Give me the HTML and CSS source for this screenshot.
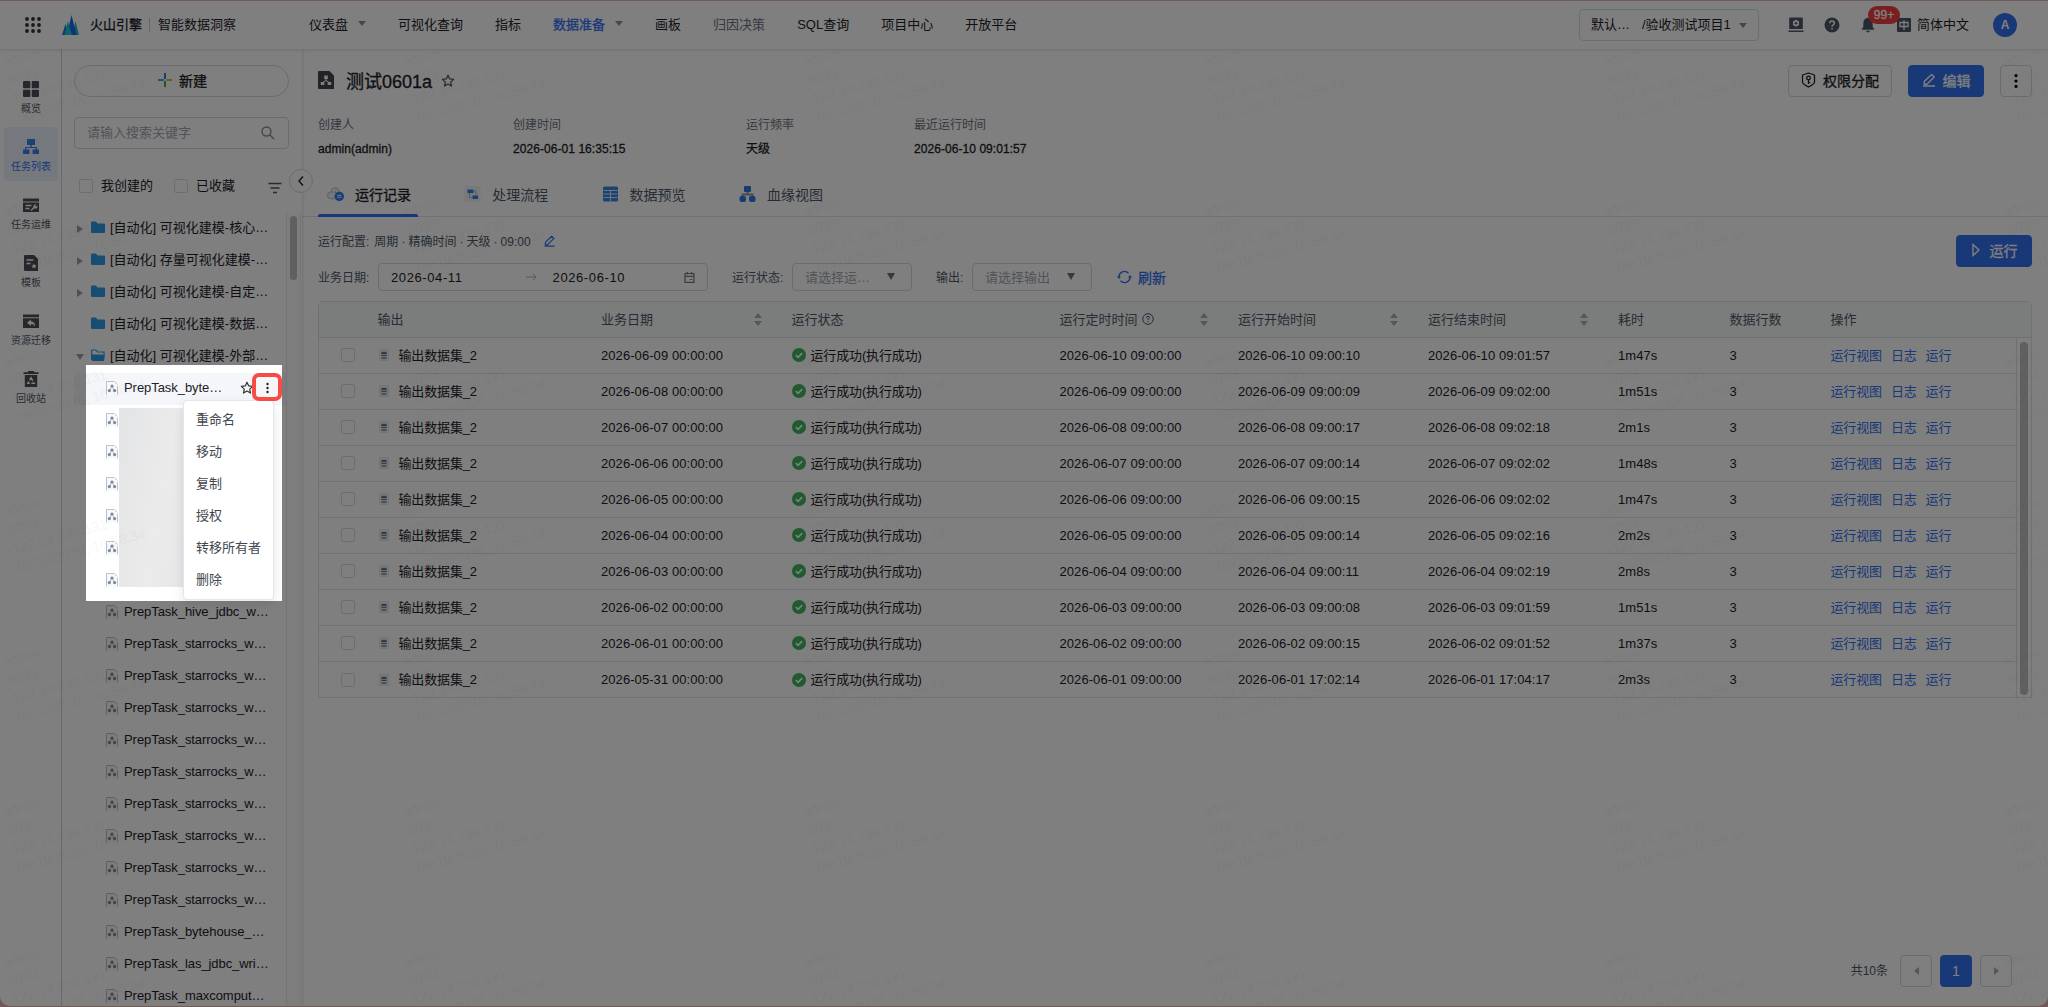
FILE: index.html
```html
<!DOCTYPE html>
<html lang="zh-CN">
<head>
  <meta charset="UTF-8">
  <meta name="viewport" content="width=device-width, initial-scale=1.0">
  <title>智能数据洞察</title>
  <link rel="stylesheet" href="styles.css">
</head>
<body>
  <!-- Icons -->
  <svg class="sprite" width="0" height="0">
    <symbol id="star" viewBox="0 0 14 14"><path d="M7 1.2l1.7 3.7 4 .5-3 2.7.8 4L7 10.1l-3.5 2 .8-4-3-2.7 4-.5z" fill="none" stroke="currentColor" stroke-width="1.2" stroke-linejoin="round"/></symbol>
    <symbol id="dots" viewBox="0 0 4 16"><circle cx="2" cy="2.6" r="1.6"/><circle cx="2" cy="8" r="1.6"/><circle cx="2" cy="13.4" r="1.6"/></symbol>
    <symbol id="edit" viewBox="0 0 14 14"><path d="M2.2 8.6L9.6 1.4l2.6 2.6-7.4 7.2H2.2zM1 13h12" fill="none" stroke="currentColor" stroke-width="1.4" stroke-linejoin="round"/></symbol>
    <symbol id="folder" viewBox="0 0 14 13"><path d="M0 1.5Q0 .5 1 .5h4l1.500 2H13q1 0 1 1V11q0 1-1 1H1q-1 0-1-1z" fill="#2a9be6"/></symbol>
    <symbol id="folder-open" viewBox="0 0 14 13"><path d="M.6 11V1.500Q.6 1 1 1h4l1.500 2H13v2" fill="none" stroke="#2a9be6" stroke-width="1.200"/><path d="M1 5.500h13L13 12H1z" fill="#2a9be6"/></symbol>
    <symbol id="task" viewBox="0 0 12 14"><path d="M.5.5h8l3 3v10H.5z" fill="#f7f8fa"/><path d="M.5 13.500V.5h7.500M11.500 5v8.500M8.500.5l3 3" fill="none" stroke="#b4bac5" stroke-width=".9"/><circle cx="6" cy="5" r="1.600"/><circle cx="3.400" cy="9.600" r="1.600"/><circle cx="8.600" cy="9.600" r="1.600"/><path d="M6 5L3.400 9.600M6 5l2.600 4.600" stroke="currentColor" stroke-width=".6"/></symbol>
    <symbol id="dataset" viewBox="0 0 10 12"><path d="M.5.5h9v11h-9z" fill="#f0f1f4" stroke="#dfe2e8" stroke-width=".7"/><ellipse cx="5" cy="4" rx="3" ry="1.200"/><path d="M2 5.400q3 1.400 6 0v1.200q-3 1.400-6 0zM2.500 8q2.500 1.200 5 0v1.200q-2.500 1-5 0z"/></symbol>
    <symbol id="ok" viewBox="0 0 14 14"><circle cx="7" cy="7" r="7" fill="#41b45f"/><path d="M3.800 7.200l2.300 2.200 4.100-4.300" fill="none" stroke="#fff" stroke-width="1.600"/></symbol>
    <symbol id="org" viewBox="0 0 16 16"><path d="M4 0h8v6H4zM0 10.500h6.500V15H0zM9.500 10.500H16V15H9.500zM7.300 6h1.400v2H14v2.500h-1.400V9H3.400v1.500H2V8h5.300z"/></symbol>
  </svg>

  <div class="window">
    <header class="header">
      <svg class="apps" width="16" height="16" viewBox="0 0 16 16"><circle cx="2" cy="2" r="1.900"/><circle cx="8" cy="2" r="1.900"/><circle cx="14" cy="2" r="1.900"/><circle cx="2" cy="8" r="1.900"/><circle cx="8" cy="8" r="1.900"/><circle cx="14" cy="8" r="1.900"/><circle cx="2" cy="14" r="1.900"/><circle cx="8" cy="14" r="1.900"/><circle cx="14" cy="14" r="1.900"/></svg>
      <svg class="logo" width="17" height="20" viewBox="0 0 17 20"><path d="M10 20L13.500 6 17 20z" fill="#2db7c4"/><path d="M0 20L3.500 9 7 20z" fill="#1e74e6"/><path d="M5 20L9.500 0 14.500 20z" fill="#1668e8"/><path d="M2.500 20L5.800 6 10 20z" fill="#23c3cf"/></svg>
      <b class="brand">火山引擎</b>
      <i class="brand-line"></i>
      <span class="product">智能数据洞察</span>
      <nav class="nav">
        <span>仪表盘<i class="caret"></i></span>
        <span>可视化查询</span>
        <span>指标</span>
        <span class="current">数据准备<i class="caret"></i></span>
        <span>画板</span>
        <span class="muted">归因决策</span>
        <span>SQL查询</span>
        <span>项目中心</span>
        <span>开放平台</span>
      </nav>
      <div class="project"><span>默认…</span><span>/验收测试项目1</span><i class="caret"></i></div>
      <div class="tools">
        <svg width="16" height="16" viewBox="0 0 16 16"><path fill-rule="evenodd" d="M2 .5h12q.8 0 .8.800V12H1.200V1.300Q1.200.5 2 .5zm6 2.300L5 4.500v3.600l3 1.700 3-1.700V4.500zM.5 13.500h15V15H.5z"/><circle cx="8" cy="6.300" r="1.300"/></svg>
        <svg width="16" height="16" viewBox="0 0 16 16"><circle cx="8" cy="8" r="7.500"/><path d="M5.700 6.300q0-2.200 2.300-2.200t2.300 2q0 1.200-1.200 1.800Q8 8.400 8 9.700M8 10.900v1.700" fill="none" stroke="#fff" stroke-width="1.500"/></svg>
        <div class="bell">
          <svg width="14" height="16" viewBox="0 0 14 16"><path d="M7 .8q4.700.7 4.700 5.500V10l1.500 2v.8H.8V12l1.500-2V6.300Q2.300 1.500 7 .8zM5 13.700h4Q8.700 15.500 7 15.500T5 13.700z"/></svg>
          <span class="badge">99+</span>
        </div>
        <div class="lang">
          <svg width="14" height="14" viewBox="0 0 14 14"><rect width="14" height="14" rx="1"/><path d="M3 4.500h8v4H3zM7 2.200v9.800" fill="none" stroke="#fff" stroke-width="1.300"/></svg>
          <span>简体中文</span>
        </div>
        <div class="avatar">A</div>
      </div>
    </header>

    <div class="body">
      <aside class="rail">
        <div class="rail-item"><svg width="16" height="16" viewBox="0 0 16 16"><rect width="7.300" height="7.300" rx="1"/><rect x="8.700" width="7.300" height="7.300" rx="1"/><rect y="8.700" width="7.300" height="7.300" rx="1"/><rect x="8.700" y="8.700" width="7.300" height="7.300" rx="1"/></svg>概览</div>
        <div class="rail-item active"><svg width="16" height="16"><use href="#org"/></svg>任务列表</div>
        <div class="rail-item"><svg width="16" height="16" viewBox="0 0 16 16"><path d="M0 1.500h16v3H0zM0 5.500h16V15H0z"/><path d="M2.500 8.500h6M2.500 11.500h4M8 13.500l3.500-3.500" stroke="#fff" stroke-width="1.300"/><path d="M10.500 10.500a2.300 2.300 0 013-3l-1.200 1.300.9.900 1.300-1.200a2.300 2.300 0 01-3 3z" fill="#fff"/></svg>任务运维</div>
        <div class="rail-item"><svg width="16" height="16" viewBox="0 0 16 16"><path d="M2 0h9l4 4v12H2q-1 0-1-1V1q0-1 1-1z"/><path d="M3.500 5h7M3.500 8.500h4" stroke="#fff" stroke-width="1.300"/><path d="M11 8.500l.8 1.700 1.800.3-1.300 1.200.3 1.800-1.600-.9-1.600.9.300-1.800-1.300-1.200 1.800-.3z" fill="#fff"/></svg>模板</div>
        <div class="rail-item"><svg width="16" height="16" viewBox="0 0 16 16"><path d="M0 1.500h16v2.700H0zM0 5.200h16V15H0z"/><path d="M4 9.800l4-3.300v2q4 0 4 5-1.300-2.400-4-2.400V13z" fill="#fff"/></svg>资源迁移</div>
        <div class="rail-item"><svg width="16" height="16" viewBox="0 0 16 16"><path d="M5 0h6v1.200h4.500v1.700H.5V1.200H5zM1.800 4h12.400v12H1.800z"/><path d="M8 6.700l3.200 5.500H4.800z" fill="none" stroke="#fff" stroke-width="1.400" stroke-dasharray="3.800 1.600"/></svg>回收站</div>
      </aside>

      <section class="sidebar">
        <div class="new-btn"><svg width="14" height="14" viewBox="0 0 14 14"><path d="M7 0v6" stroke="#2b6bf3" stroke-width="1.800"/><path d="M0 7h6" stroke="#35a9f5" stroke-width="1.800"/><path d="M8 7h6" stroke="#f5b324" stroke-width="1.800"/><path d="M7 8v6" stroke="#2ea12e" stroke-width="1.800"/></svg>新建</div>
        <div class="search"><span>请输入搜索关键字</span><svg width="14" height="14" viewBox="0 0 14 14"><circle cx="5.500" cy="5.500" r="4.500"/><path d="M8.800 8.800l4.400 4.400"/></svg></div>
        <div class="filters">
          <i class="checkbox"></i><span>我创建的</span>
          <i class="checkbox second"></i><span>已收藏</span>
          <svg width="14" height="12" viewBox="0 0 14 12"><path d="M.5 1.500h13M2.500 6h9M5 10.500h4" stroke="#4e5969" stroke-width="1.300"/></svg>
        </div>
        <div class="tree-wrap">
          <div class="tree" id="tree"></div>
          <div class="tree-scroll"><i></i></div>
        </div>
        <div class="collapse"><svg width="8" height="12" viewBox="0 0 8 12"><path d="M6 1.500L2 6l4 4.500" fill="none" stroke="#1d2129" stroke-width="1.400"/></svg></div>
      </section>

      <main class="main">
        <div class="title-row">
          <svg width="16" height="18" viewBox="0 0 16 18"><path d="M1 0h10.500L16 4.500V18H1q-1 0-1-1V1q0-1 1-1z" fill="#42464e"/><path d="M6.200 4.500h3.600V8H6.200zM2.800 11h3.500v3H2.800zM9.700 11h3.500v3H9.700zM7.500 8h1v1.200l3 2-1 .6L8 10l-2.500 1.800-1-.6 3-2z" fill="#fff"/></svg>
          <h1>测试0601a</h1>
          <svg class="fav" width="14" height="14"><use href="#star"/></svg>
          <div class="btn auth"><svg width="15" height="16" viewBox="0 0 15 16"><path d="M7.500 1l6 2v7q0 2-6 5-6-3-6-5V3z" fill="none" stroke="#1d2129" stroke-width="1.300" stroke-linejoin="round"/><circle cx="7.500" cy="6" r="1.800" fill="none" stroke="#1d2129" stroke-width="1.300"/><path d="M7.500 8v4M7.500 10.500h1.700" stroke="#1d2129" stroke-width="1.200"/></svg>权限分配</div>
          <div class="btn primary"><svg width="14" height="14"><use href="#edit"/></svg>编辑</div>
          <div class="btn more"><svg width="4" height="16"><use href="#dots"/></svg></div>
        </div>

        <div class="meta">
          <div><p>创建人</p><b>admin(admin)</b></div>
          <div><p>创建时间</p><b>2026-06-01 16:35:15</b></div>
          <div><p>运行频率</p><b>天级</b></div>
          <div><p>最近运行时间</p><b>2026-06-10 09:01:57</b></div>
        </div>

        <div class="tabs">
          <div class="tab on"><svg width="18" height="16" viewBox="0 0 18 16"><path d="M4 13Q.5 13 .5 9.500T4 6Q4.500 1.500 8.500 1.500T13 6q2 .5 2.500 3v4z" fill="#f2f3f5" stroke="#a5abb5" stroke-width=".8"/><path d="M6 5.500v1M9 5.500v1" stroke="#555"/><circle cx="13" cy="10.500" r="5" fill="#2a7df0"/><path d="M10.500 9.500h4.500l-1-1M15.500 11.500H11l1 1" fill="none" stroke="#fff" stroke-width=".9"/></svg>运行记录</div>
          <div class="tab"><svg width="16" height="16" viewBox="0 0 16 16"><rect width="16" height="16" fill="#f2f3f5"/><path d="M3 3.500h6v3.500H3zM8 9.500h5.500V13H8z" fill="#2a82ee"/><path d="M9 5h2.500v4.500M5 7v4.500h2.500" fill="none" stroke="#a9b4c6"/></svg>处理流程</div>
          <div class="tab"><svg width="16" height="16" viewBox="0 0 16 16"><rect x=".5" y=".5" width="15" height="15" rx="1.500" fill="#3a85e2"/><path d="M1 4.500h14M1 8h14M1 11.500h14M8 4v11.500" stroke="#dcebff"/></svg>数据预览</div>
          <div class="tab"><svg width="16" height="16" viewBox="0 0 16 16"><path d="M8 5v3M3 11V8.500h10V11" fill="none" stroke="#8e97a6" stroke-width="2"/><rect x="4.500" width="7" height="6" rx="1" fill="#2a7be2"/><rect y="10" width="6.500" height="6" rx="2" fill="#2a7be2"/><rect x="9.500" y="10" width="6.500" height="6" rx="2" fill="#2a7be2"/></svg>血缘视图</div>
        </div>

        <div class="controls">
          <div>
            <div class="config"><span>运行配置:</span>周期 · 精确时间 · 天级 · 09:00<svg width="13" height="12" viewBox="0 0 14 14"><use href="#edit"/></svg></div>
            <div class="filter-row">
              <label>业务日期:</label>
              <div class="range"><span>2026-04-11</span><svg width="11" height="8" viewBox="0 0 11 8"><path d="M0 4h10M7 1l3 3-3 3" fill="none" stroke="#a9aeb8"/></svg><span>2026-06-10</span><svg class="cal" width="11" height="11" viewBox="0 0 11 11"><path d="M1 1.500h9v8.800H1zM1 4.300h9M3.300 0v2.500M7.700 0v2.500M6 7.500h2.200" fill="none" stroke="#737b89" stroke-width="1.200"/></svg></div>
              <label class="lb-state">运行状态:</label>
              <div class="select">请选择运…<i class="caret"></i></div>
              <label class="lb-out">输出:</label>
              <div class="select">请选择输出<i class="caret"></i></div>
              <div class="refresh"><svg width="15" height="14" viewBox="0 0 15 14"><path d="M2 7.500a5.500 5.500 0 019.500-4.300M13 6.500a5.500 5.500 0 01-9.500 4.300" fill="none" stroke="currentColor" stroke-width="1.400"/><path d="M0 6.500h4L2 9zM11 7.500h4l-2-2.500z"/></svg>刷新</div>
            </div>
          </div>
          <div class="btn primary run"><svg width="10" height="14" viewBox="0 0 10 14"><path d="M2 1.500L8 7l-6 5.500z" fill="none" stroke="currentColor" stroke-width="1.400"/></svg>运行</div>
        </div>

        <div class="table">
          <div class="tr th">
            <div></div>
            <div>输出</div>
            <div>业务日期<i class="sort"></i></div>
            <div>运行状态</div>
            <div>运行定时时间<svg class="help" width="12" height="12" viewBox="0 0 12 12"><circle cx="6" cy="6" r="5.300"/><path d="M4.500 4.800q0-1.500 1.500-1.500t1.500 1.400Q7.500 5.500 6 6.200v.8M6 8v1.200"/></svg><i class="sort"></i></div>
            <div>运行开始时间<i class="sort"></i></div>
            <div>运行结束时间<i class="sort"></i></div>
            <div>耗时</div>
            <div>数据行数</div>
            <div>操作</div>
          </div>
          <div class="table-body">
            <div class="rows" id="rows"></div>
            <div class="table-scroll"><i></i></div>
          </div>
        </div>

        <div class="pager">
          <span>共10条</span>
          <div class="page"><i class="prev"></i></div>
          <div class="page cur">1</div>
          <div class="page"><i class="next"></i></div>
        </div>
      </main>
    </div>

    <svg class="watermark" width="2048" height="957">
      <defs>
        <pattern id="wm" width="400" height="150" patternUnits="userSpaceOnUse">
          <g transform="translate(4 18) rotate(-15)">
            <text x="0" y="0">admin</text>
            <text x="0" y="19">8093</text>
            <text x="0" y="38">122.14.236.131</text>
            <text x="0" y="57">06/10/2026, 16:58:34</text>
          </g>
        </pattern>
      </defs>
      <rect width="2048" height="957" fill="url(#wm)"/>
    </svg>
  </div>

  <div class="spotlight"></div>
  <div class="mark"></div>

  <script>
    const folders = ['[自动化] 可视化建模-核心…', '[自动化] 存量可视化建模-…', '[自动化] 可视化建模-自定…', '[自动化] 可视化建模-数据…', '[自动化] 可视化建模-外部…'];
    const arrows = ['right', 'right', 'right', 'none', 'down'];
    const menu = ['重命名', '移动', '复制', '授权', '转移所有者', '删除'];
    const tasks = ['PrepTask_hive_jdbc_w…'].concat(Array(9).fill('PrepTask_starrocks_w…'), ['PrepTask_bytehouse_…', 'PrepTask_las_jdbc_wri…', 'PrepTask_maxcomput…']);
    const taskIcon = '<svg class="task-icon" width="12" height="14"><use href="#task"/></svg>';

    // Tree
    let tree = '';
    folders.forEach((name, i) => {
      const icon = i === 4 ? 'folder-open' : 'folder';
      tree += `<div class="node"><i class="arrow ${arrows[i]}"></i><svg width="14" height="13"><use href="#${icon}"/></svg><span class="folder-name">${name}</span></div>`;
    });
    tree += `<div class="node leaf hover">${taskIcon}PrepTask_byte…
      <svg class="node-star" width="14" height="14"><use href="#star"/></svg>
      <svg class="node-more" width="3" height="12"><use href="#dots"/></svg>
      <div class="menu">${menu.map(m => `<div>${m}</div>`).join('')}</div></div>`;
    tree += `<div class="hidden-names">${menu.map(() => `<div class="node leaf">${taskIcon}</div>`).join('')}<div class="cover"></div></div>`;
    tasks.forEach(name => {
      tree += `<div class="node leaf">${taskIcon}${name}</div>`;
    });
    document.getElementById('tree').innerHTML = tree;

    // Run records: business date, scheduled, start, end, cost
    const records = [
      ['2026-06-09', '2026-06-10', '09:00:10', '09:01:57', '1m47s'],
      ['2026-06-08', '2026-06-09', '09:00:09', '09:02:00', '1m51s'],
      ['2026-06-07', '2026-06-08', '09:00:17', '09:02:18', '2m1s'],
      ['2026-06-06', '2026-06-07', '09:00:14', '09:02:02', '1m48s'],
      ['2026-06-05', '2026-06-06', '09:00:15', '09:02:02', '1m47s'],
      ['2026-06-04', '2026-06-05', '09:00:14', '09:02:16', '2m2s'],
      ['2026-06-03', '2026-06-04', '09:00:11', '09:02:19', '2m8s'],
      ['2026-06-02', '2026-06-03', '09:00:08', '09:01:59', '1m51s'],
      ['2026-06-01', '2026-06-02', '09:00:15', '09:01:52', '1m37s'],
      ['2026-05-31', '2026-06-01', '17:02:14', '17:04:17', '2m3s']
    ];
    document.getElementById('rows').innerHTML = records.map(r => `<div class="tr">
      <div><i class="checkbox"></i></div>
      <div><svg class="ds" width="10" height="12"><use href="#dataset"/></svg>输出数据集_2</div>
      <div>${r[0]} 00:00:00</div>
      <div><svg class="ok" width="14" height="14"><use href="#ok"/></svg>运行成功(执行成功)</div>
      <div>${r[1]} 09:00:00</div>
      <div>${r[1]} ${r[2]}</div>
      <div>${r[1]} ${r[3]}</div>
      <div>${r[4]}</div>
      <div>3</div>
      <div class="ops"><a>运行视图</a><a>日志</a><a>运行</a></div>
    </div>`).join('');
  </script>
</body>
</html>
```

FILE: styles.css
```css
* {
  box-sizing: border-box;
}

body {
  margin: 0;
  height: 1007px;
  padding-top: 1px;
  overflow: hidden;
  background: #dfb8b0;
  font-family: "Liberation Sans", "Noto Sans CJK SC", sans-serif;
  font-size: 13px;
  color: #1d2129;
}

i {
  font-style: normal;
}

.sprite {
  position: absolute;
}

svg {
  flex: none;
}

.window {
  position: relative;
  height: 1005px;
  background: #fff;
  border-radius: 0 0 10px 10px;
  overflow: hidden;
}

.caret {
  display: inline-block;
  border: 4px solid transparent;
  border-top: 5px solid #86909c;
  border-bottom: 0;
}

.checkbox {
  display: inline-block;
  width: 14px;
  height: 14px;
  border: 1px solid #d8dce5;
  border-radius: 2px;
}

/* Header */
.header {
  position: relative;
  z-index: 3;
  display: flex;
  align-items: center;
  height: 48px;
  padding: 0 31px 0 25px;
  background: #fff;
  box-shadow: 0 1px 4px rgba(0, 0, 0, .12);
}

.header > span, .header > b, .nav, .project {
  line-height: 18px;
}

.apps {
  fill: #333;
}

.logo {
  margin: 0 11px 0 21px;
}

.brand, .new-btn, .title-row h1, .meta b, .tab.on, .btn, .refresh, .current {
  font-weight: normal;
  -webkit-text-stroke: .3px currentColor;
}

.brand-line {
  width: 1px;
  height: 14px;
  margin: 0 8px 0 7px;
  background: #c9cdd4;
}

.nav {
  display: flex;
  gap: 32px;
  margin-left: 73px;
}

.nav .caret {
  margin-left: 10px;
  vertical-align: 3px;
}

.nav .current {
  color: #3370f0;
}

.nav .muted {
  color: #6b7280;
}

.project {
  display: flex;
  align-items: center;
  width: 180px;
  height: 32px;
  margin-left: auto;
  padding: 0 11px;
  gap: 12px;
  border: 1px solid #d9dce2;
  border-radius: 4px;
}

.project .caret {
  margin-left: -4px;
}

.tools {
  display: flex;
  align-items: center;
  margin-left: 29px;
  fill: #4e5969;
}

.tools > svg + svg {
  margin-left: 20px;
}

.bell {
  position: relative;
  height: 16px;
  margin-left: 21px;
}

.badge {
  position: absolute;
  top: -11px;
  left: 7px;
  width: 32px;
  height: 18px;
  border-radius: 9px;
  background: #f53f3f;
  color: #fff;
  font-size: 12px;
  line-height: 18px;
  text-align: center;
  -webkit-text-stroke: .3px #fff;
}

.lang {
  display: flex;
  align-items: center;
  gap: 6px;
  margin-left: 22px;
  line-height: 18px;
}

.avatar {
  width: 24px;
  height: 24px;
  margin-left: 24px;
  border-radius: 50%;
  background: #3370f0;
  color: #fff;
  font-size: 12px;
  font-weight: bold;
  line-height: 24px;
  text-align: center;
}

.body {
  display: flex;
  height: 957px;
}

/* Left rail */
.rail {
  display: flex;
  flex-direction: column;
  gap: 4px;
  width: 62px;
  padding: 20px 4px;
  border-right: 1px solid #d5d8de;
}

.rail-item {
  display: flex;
  flex-direction: column;
  align-items: center;
  gap: 5px;
  width: 54px;
  height: 54px;
  padding-top: 12px;
  border-radius: 4px;
  font-size: 10px;
  line-height: 14px;
  color: #4e5969;
  fill: #4a4e56;
}

.rail-item.active {
  background: #eaf1fb;
  color: #3370f0;
  fill: #3a82ea;
}

/* Tree panel */
.sidebar {
  position: relative;
  z-index: 2;
  display: flex;
  flex-direction: column;
  width: 240px;
  padding-top: 16px;
  box-shadow: 1px 0 3px rgba(0, 0, 0, .12);
}

.new-btn {
  display: flex;
  align-items: center;
  justify-content: center;
  gap: 7px;
  width: 215px;
  height: 32px;
  margin-left: 12px;
  padding: 0 0 2px 2px;
  border: 1px solid #d5d8de;
  border-radius: 16px;
  font-size: 14px;
}

.search {
  display: flex;
  align-items: center;
  justify-content: space-between;
  width: 215px;
  height: 32px;
  margin: 20px 0 0 12px;
  padding: 0 13px 0 12px;
  border: 1px solid #d5d8de;
  border-radius: 4px;
  color: #a0a6b1;
}

.search span {
  padding-bottom: 4px;
}

.search svg {
  fill: none;
  stroke: #86909c;
  stroke-width: 1.4;
}

.filters {
  display: flex;
  align-items: center;
  height: 20px;
  margin: 27px 0 17px 17px;
}

.filters span {
  padding-bottom: 3px;
}

.filters .checkbox {
  margin-right: 8px;
}

.filters .second {
  margin-left: 21px;
}

.filters svg {
  margin: 3px 0 0 33px;
}

.tree-wrap {
  display: flex;
  flex: 1;
  min-height: 0;
}

.tree {
  width: 224px;
  overflow: hidden;
}

.tree-scroll {
  width: 15px;
  padding: 3px 3px 0;
  border: 1px solid #ebebeb;
  border-width: 0 1px;
  background: #fafafa;
}

.tree-scroll i {
  display: block;
  height: 64px;
  border-radius: 4px;
  background: #c1c1c1;
}

.node {
  display: flex;
  align-items: center;
  height: 32px;
  margin-left: 12px;
  padding-bottom: 3px;
  white-space: nowrap;
}

.folder-name {
  margin-left: 5px;
  padding-bottom: 2px;
}

.arrow {
  width: 9px;
  margin: 3px 4px 0 4px;
}

.arrow.right {
  border: 4px solid transparent;
  border-left: 6px solid #9aa1ad;
  border-right: 0;
  width: 6px;
  margin: 3px 8px 0 3px;
}

.arrow.down {
  border: 4px solid transparent;
  border-top: 6px solid #9aa1ad;
  border-bottom: 0;
  width: 8px;
  margin: 3px 7px 0 2px;
}

.leaf {
  padding-left: 32px;
  letter-spacing: -.06px;
}

.task-icon {
  margin-right: 6px;
  fill: #7a879c;
  color: #7a879c;
}

.hover {
  position: relative;
  background: #f4f6f9;
}

.node-star {
  margin-left: 18px;
  color: #333;
}

.node-more {
  margin-left: 12px;
  fill: #222;
}

.menu {
  position: absolute;
  z-index: 2;
  top: 27px;
  left: 109px;
  width: 91px;
  height: 200px;
  padding: 3px 12px;
  border: 1px solid #e2e5eb;
  border-radius: 4px;
  background: #fff;
  box-shadow: 0 4px 12px rgba(0, 0, 0, .1);
  color: #42464e;
  line-height: 32px;
  letter-spacing: 0;
}

.hidden-names {
  position: relative;
}

.cover {
  position: absolute;
  top: 3px;
  left: 57px;
  width: 66px;
  height: 179px;
  background: linear-gradient(100deg, #e3e4e5, #ebebec 60%, #e6e7e8);
}

.collapse {
  position: absolute;
  top: 120px;
  left: 227px;
  display: flex;
  align-items: center;
  justify-content: center;
  width: 24px;
  height: 24px;
  border: 1px solid #d5d8de;
  border-radius: 50%;
  background: #fff;
}

/* Main */
.main {
  display: flex;
  flex: 1;
  flex-direction: column;
  min-width: 0;
}

.title-row {
  display: flex;
  align-items: center;
  height: 32px;
  margin: 16px 16px 0;
}

.title-row > svg:first-child {
  margin-bottom: 2px;
}

.title-row h1 {
  margin: 0 9px 0 12px;
  padding-bottom: 3px;
  font-size: 18px;
}

.fav {
  margin-bottom: 1px;
  color: #4a4f58;
}

.btn {
  display: flex;
  align-items: center;
  justify-content: center;
  gap: 7px;
  height: 32px;
  padding-bottom: 2px;
  border: 1px solid #d5d8de;
  border-radius: 4px;
  font-size: 14px;
}

.auth {
  width: 104px;
  margin-left: auto;
}

.primary {
  width: 76px;
  margin-left: 16px;
  border-color: #3370f0;
  background: #3370f0;
  color: #fff;
}

.more {
  width: 32px;
  margin-left: 16px;
  padding-bottom: 0;
}

.meta {
  display: grid;
  grid-template-columns: 195px 233px 168px auto;
  margin: 18px 16px 0;
  font-size: 12px;
  line-height: 20px;
}

.meta p {
  margin: 0 0 4px;
  color: #6b7280;
}

.meta b {
  letter-spacing: .06px;
}

.tabs {
  display: flex;
  gap: 37.3px;
  height: 42px;
  margin-top: 16px;
  padding: 0 16px;
  border-bottom: 1px solid #dfe2e8;
  color: #4e5969;
}

.tab {
  position: relative;
  display: flex;
  align-items: center;
  gap: 11px;
  width: 100px;
  height: 41px;
  padding: 0 0 4px 9px;
  font-size: 14px;
}

.tab svg {
  width: 17px;
}

.tab.on {
  color: #1d2129;
}

.tab.on::after {
  content: "";
  position: absolute;
  bottom: -1px;
  left: 0;
  width: 100px;
  height: 3px;
  border-radius: 2px 2px 0 0;
  background: #3370f0;
}

.controls {
  display: flex;
  justify-content: space-between;
  height: 84px;
  padding: 0 16px;
}

.run {
  margin-top: 18px;
  gap: 9px;
}

.config {
  display: flex;
  align-items: center;
  height: 19px;
  margin-top: 14px;
  font-size: 12px;
  color: #4e5969;
  word-spacing: -.3px;
}

.config span {
  margin-right: 5px;
}

.config svg {
  margin-left: 12px;
  color: #3370f0;
}

.filter-row {
  display: flex;
  align-items: center;
  height: 28px;
  margin-top: 13px;
}

.filter-row label {
  width: 60px;
  padding-bottom: 2px;
  font-size: 12px;
  color: #4e5969;
}

.filter-row .lb-state {
  margin-left: 24px;
}

.filter-row .lb-out {
  width: 36px;
  margin-left: 24px;
}

.range, .select {
  display: flex;
  align-items: center;
  height: 28px;
  border: 1px solid #d5d8de;
  border-radius: 4px;
}

.range {
  width: 330px;
  padding: 0 12px;
  letter-spacing: .6px;
}

.range svg {
  margin: 0 16px 0 63px;
}

.range .cal {
  margin: 0 0 0 auto;
}

.select {
  width: 120px;
  padding: 0 16px 1px 12px;
  justify-content: space-between;
  color: #a0a6b1;
}

.select .caret {
  border-top: 7px solid #6b7280;
}

.refresh {
  display: flex;
  align-items: center;
  gap: 6px;
  margin-left: 25px;
  color: #3370f0;
  fill: #3370f0;
  font-size: 14px;
}

/* Records table */
.table {
  margin: 0 16px;
  border: 1px solid #dfe2e8;
  border-radius: 4px 4px 0 0;
}

.tr {
  display: grid;
  grid-template-columns: 58.5px 223.5px 190.5px 268px 178.5px 190px 190px 111.5px 101px auto;
  height: 36px;
  border-bottom: 1px solid #dfe2e8;
}

.tr > div {
  display: flex;
  align-items: center;
  padding-bottom: 2px;
}

.rows .tr > div {
  padding-bottom: 1px;
  letter-spacing: .07px;
}

.rows .tr > div:nth-child(2), .rows .tr > div:nth-child(4), .rows .tr > div.ops {
  padding-bottom: 3px;
  letter-spacing: -.15px;
}

.rows .tr:last-child {
  border-bottom: 0;
}

.tr .checkbox {
  margin-left: 22px;
}

.th {
  background: #f7f8f9;
  color: #4e5969;
}

.sort {
  width: 8px;
  height: 13px;
  margin: 1px 30px 0 auto;
}

.sort::before, .sort::after {
  content: "";
  display: block;
  border: 4px solid transparent;
  border-top: 0;
  border-bottom: 5px solid #a9aeb8;
}

.sort::after {
  margin-top: 3px;
  border-top: 5px solid #a9aeb8;
  border-bottom: 0;
}

.help {
  margin: 1px 0 0 4px;
  fill: none;
  stroke: #4e5969;
}

.table-body {
  display: flex;
  height: 359px;
}

.rows {
  width: 1698px;
  border-right: 1px solid #dfe2e8;
}

.table-scroll {
  flex: 1;
  padding: 4px 3px 2px;
}

.table-scroll i {
  display: block;
  width: 8px;
  height: 353px;
  border-radius: 4px;
  background: #c1c1c1;
}

.ds {
  margin: 2px 10px 0 1px;
  fill: #6b7484;
}

.ok {
  margin: 2px 5px 0 0;
}

.ops {
  gap: 9px;
  color: #3370f0;
}

.pager {
  display: flex;
  align-items: center;
  justify-content: flex-end;
  gap: 8px;
  margin: auto 36px 19px;
  font-size: 12px;
  color: #4e5969;
}

.pager span {
  margin-right: 4px;
  padding-bottom: 3px;
}

.page {
  display: flex;
  align-items: center;
  justify-content: center;
  width: 32px;
  height: 32px;
  border: 1px solid #d5d8de;
  border-radius: 4px;
  font-size: 14px;
}

.page.cur {
  border-color: #3370f0;
  background: #3370f0;
  color: #fff;
}

.page i {
  border: 4px solid transparent;
}

.page .prev {
  border-left: 0;
  border-right: 5px solid #a9aeb8;
}

.page .next {
  border-right: 0;
  border-left: 5px solid #a9aeb8;
}

/* Layers over the page */
.watermark {
  position: absolute;
  top: 48px;
  left: 0;
  z-index: 5;
  pointer-events: none;
}

.watermark text {
  font-size: 14px;
  fill: rgba(0, 0, 0, .03);
}

.spotlight {
  position: absolute;
  z-index: 10;
  top: 365px;
  left: 86px;
  width: 196px;
  height: 236px;
  box-shadow: 0 0 0 2100px rgba(0, 0, 0, .5);
}

.mark {
  position: absolute;
  z-index: 11;
  top: 373px;
  left: 252px;
  width: 30px;
  height: 28px;
  border: 4px solid #f94b45;
  border-radius: 7px;
}
```
